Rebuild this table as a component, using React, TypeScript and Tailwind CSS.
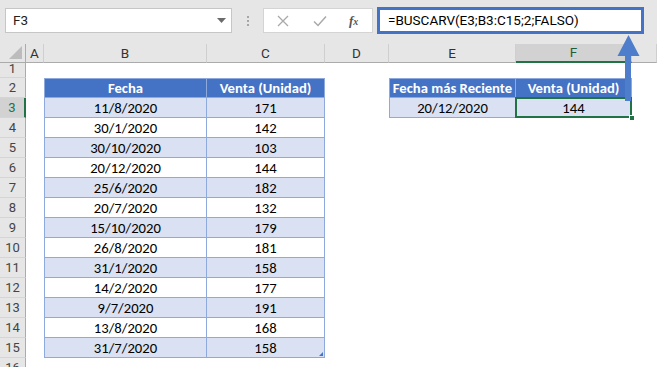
import { Fragment } from "react";

const COLS = [
  { key: "A", w: "w-[18px]" },
  { key: "B", w: "w-[163px]" },
  { key: "C", w: "w-[118px]" },
  { key: "D", w: "w-[64px]" },
  { key: "E", w: "w-[127px]" },
  { key: "F", w: "w-[116px]" },
  { key: "", w: "w-[25px]" },
];

const sales: [string, number][] = [
  ["11/8/2020", 171],
  ["30/1/2020", 142],
  ["30/10/2020", 103],
  ["20/12/2020", 144],
  ["25/6/2020", 182],
  ["20/7/2020", 132],
  ["15/10/2020", 179],
  ["26/8/2020", 181],
  ["31/1/2020", 158],
  ["14/2/2020", 177],
  ["9/7/2020", 191],
  ["13/8/2020", 168],
  ["31/7/2020", 158],
];

const cellFont = "font-['Calibri','Carlito','Liberation_Sans',sans-serif] text-[14.67px]";
const uiFont = "font-['Segoe_UI',Roboto,'Liberation_Sans',sans-serif]";

function RowHead({ n, active, h = "h-[20px]" }: { n: number; active?: boolean; h?: string }) {
  return (
    <div
      className={`${h} w-[26px] shrink-0 flex items-center justify-center border-b border-[#d5d5d5] text-[13px] ${uiFont} ${
        active
          ? "bg-[#d2d2d2] text-[#217346] border-r-2 border-r-[#217346]"
          : "bg-[#e6e6e6] text-[#444] border-r border-r-[#ababab]"
      }`}
    >
      {n}
    </div>
  );
}

function Cell({
  w,
  kind,
  first,
  top,
  children,
  extra,
}: {
  w: string;
  kind?: "head" | "band" | "plain";
  first?: boolean;
  top?: boolean;
  children?: React.ReactNode;
  extra?: React.ReactNode;
}) {
  if (!kind) return <div className={`${w} shrink-0 h-full`} />;
  const bg = kind === "head" ? "bg-[#4472c4] text-white font-bold" : kind === "band" ? "bg-[#d9e1f2] text-black" : "bg-white text-black";
  return (
    <div
      className={`${w} shrink-0 h-full relative flex items-center justify-center whitespace-nowrap border-r border-b border-[#8ea9db] ${
        first ? "border-l" : ""
      } ${top ? "border-t" : ""} ${bg} ${cellFont}`}
    >
      {children}
      {extra}
    </div>
  );
}

export default function App() {
  return (
    <div className="relative w-[657px] h-[367px] overflow-hidden bg-white">
      {/* formula bar */}
      <div className="h-[44px] bg-[#e6e6e6] flex items-start pt-[8px]">
        <div className={`ml-[5px] w-[227px] h-[25px] bg-white border border-[#c6c6c6] flex items-center justify-between pl-[7px] pr-[5px] text-[13.5px] text-[#222] ${uiFont}`}>
          <span>F3</span>
          <svg width="9" height="5" viewBox="0 0 9 5">
            <path d="M0 0h9L4.5 5z" fill="#6b6b6b" />
          </svg>
        </div>
        <div className="w-[31px] h-[25px] flex flex-col items-center justify-center gap-[2px]">
          <span className="w-[2px] h-[2px] bg-[#a6a6a6]" />
          <span className="w-[2px] h-[2px] bg-[#a6a6a6]" />
          <span className="w-[2px] h-[2px] bg-[#a6a6a6]" />
        </div>
        <div className="w-[110px] h-[25px] bg-white border border-[#d4d4d4] flex items-center pl-[13px]">
          <svg width="12" height="12" viewBox="0 0 12 12" className="mr-[24px]">
            <path d="M1 1l10 10M11 1L1 11" stroke="#a9a9a9" strokeWidth="1.3" />
          </svg>
          <svg width="14" height="12" viewBox="0 0 14 12" className="mr-[22px]">
            <path d="M1 6.5l4 4L13 1.5" stroke="#a9a9a9" strokeWidth="1.5" fill="none" />
          </svg>
          <span className="font-['Liberation_Serif',serif] italic font-bold text-[13px] text-[#555] leading-none">
            f<span className="text-[10px]">x</span>
          </span>
        </div>
        <div className={`ml-[4px] w-[267px] h-[27px] -mt-[1px] bg-white border-[3px] border-[#4472c4] flex items-center pl-[8px] text-[13.5px] text-black ${uiFont}`}>
          =BUSCARV(E3;B3:C15;2;FALSO)
        </div>
      </div>

      {/* column headers */}
      <div className="flex h-[19px]">
        <div className="w-[26px] h-full bg-[#e6e6e6] border-r border-b border-[#ababab] relative">
          <svg width="14" height="14" viewBox="0 0 14 14" className="absolute right-[2px] bottom-[2px]">
            <path d="M13 0v13H0z" fill="#bcbcbc" />
          </svg>
        </div>
        {COLS.map((c, i) => (
          <div
            key={i}
            className={`${c.w} shrink-0 h-full flex items-center justify-center text-[13.5px] ${uiFont} border-r border-r-[#cfcfcf] ${
              c.key === "F"
                ? "bg-[#d2d2d2] text-[#1e5e3b] border-b-2 border-b-[#217346]"
                : "bg-[#e6e6e6] text-[#333] border-b border-b-[#ababab]"
            }`}
          >
            {c.key}
          </div>
        ))}
      </div>

      {/* row 1 */}
      <div className="flex h-[15px]">
        <div className={`h-[15px] w-[26px] shrink-0 flex items-start justify-center border-b border-[#d5d5d5] bg-[#e6e6e6] text-[#444] border-r border-r-[#ababab] text-[13px] leading-[12px] ${uiFont}`}>
          1
        </div>
      </div>

      {/* row 2: headers of both tables */}
      <div className="flex h-[20px]">
        <RowHead n={2} />
        <Cell w={COLS[0].w} />
        <Cell w={COLS[1].w} kind="head" first top>Fecha</Cell>
        <Cell w={COLS[2].w} kind="head" top>Venta (Unidad)</Cell>
        <Cell w={COLS[3].w} />
        <Cell w={COLS[4].w} kind="head" first top>Fecha más Reciente</Cell>
        <Cell w={COLS[5].w} kind="head" top>Venta (Unidad)</Cell>
      </div>

      {sales.map(([date, qty], i) => {
        const row = i + 3;
        const kind = row % 2 === 1 ? "band" : "plain";
        return (
          <div key={row} className="flex h-[20px]">
            <RowHead n={row} active={row === 3} />
            <Cell w={COLS[0].w} />
            <Cell w={COLS[1].w} kind={kind} first>{date}</Cell>
            <Cell
              w={COLS[2].w}
              kind={kind}
              extra={
                row === 15 ? (
                  <svg width="4" height="4" viewBox="0 0 4 4" className="absolute right-[1px] bottom-[1px]">
                    <path d="M4 0v4H0z" fill="#4472c4" />
                  </svg>
                ) : null
              }
            >
              {qty}
            </Cell>
            {row === 3 && (
              <Fragment>
                <Cell w={COLS[3].w} />
                <Cell w={COLS[4].w} kind="band" first>20/12/2020</Cell>
                <Cell
                  w={COLS[5].w}
                  kind="band"
                  extra={
                    <>
                      <div className="absolute -top-[1px] -left-[1px] -right-[1px] -bottom-[1px] border-2 border-[#217346]" />
                      <div className="absolute -right-[4px] -bottom-[4px] w-[6px] h-[6px] bg-[#217346] border border-white" />
                    </>
                  }
                >
                  144
                </Cell>
              </Fragment>
            )}
          </div>
        );
      })}

      <div className="flex h-[20px]">
        <RowHead n={16} />
      </div>

      {/* callout arrow from F3 up to the formula */}
      <svg width="657" height="367" viewBox="0 0 657 367" className="absolute left-0 top-0 pointer-events-none">
        <rect x="625" y="54" width="6" height="47" fill="#4e7ecb" />
        <path d="M628.5 35L617.5 56H639.5Z" fill="#4e7ecb" />
      </svg>
    </div>
  );
}
